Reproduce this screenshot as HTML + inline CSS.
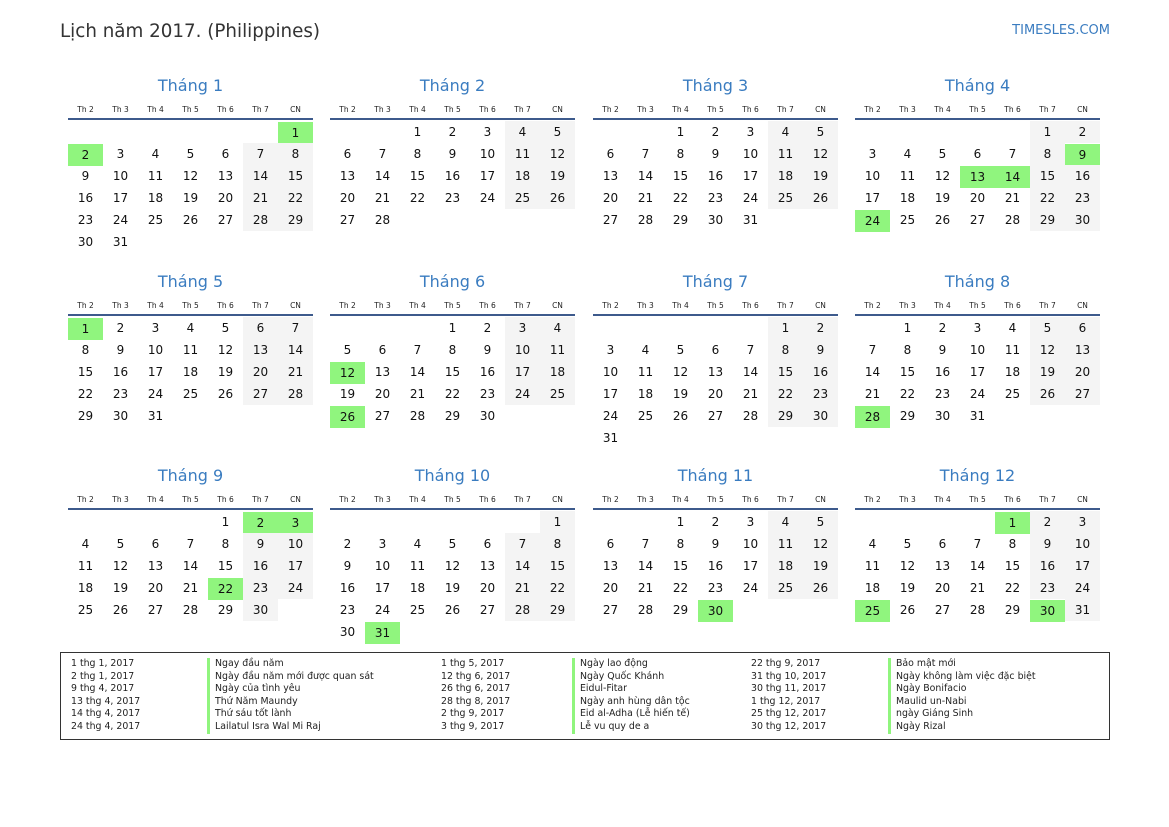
<!DOCTYPE html>
<html><head><meta charset="utf-8"><style>
*{margin:0;padding:0}
body{width:1169px;height:827px;background:#fff;position:relative;font-family:"DejaVu Sans","Liberation Sans",sans-serif;color:#111;overflow:hidden}
.title{position:absolute;left:60px;top:21px;font-size:18.3px;color:#333}
.site{position:absolute;right:59px;top:23px;font-size:13px;color:#3a7cc0}
.m{position:absolute;width:245px}
.t{height:28px;line-height:28px;text-align:center;font-size:16px;color:#3a7cc0}
.hd{position:absolute;top:32px;left:0;width:245px;height:14px;border-bottom:2px solid #3d5a8c;display:flex}
.hd i{font-style:normal;width:35px;text-align:center;font-size:7.5px;line-height:12px;color:#222}
.g{position:absolute;top:49px;left:0;display:grid;grid-template-columns:repeat(7,35px);grid-auto-rows:22px}
.g i{font-style:normal;text-align:center;line-height:22px;font-size:12px}
.g i:nth-child(7n+6):not(:empty),.g i:nth-child(7n):not(:empty){background:#f4f4f4}
.g i.h{background:#90f57e !important;margin:1px 0 -1px}
.lg{position:absolute;left:60px;top:652px;width:1048px;height:86px;border:1px solid #333;font-size:9.4px;color:#222}
.c{position:absolute;top:5px;line-height:12.6px}
.n{border-left:3px solid #90f57e;padding-left:5px}
</style></head><body>
<div class="title">Lịch năm 2017. (Philippines)</div>
<div class="site">TIMESLES.COM</div>

<div class="m" style="left:68px;top:72px"><div class="t">Tháng 1</div><div class="hd"><i>Th 2</i><i>Th 3</i><i>Th 4</i><i>Th 5</i><i>Th 6</i><i>Th 7</i><i>CN</i></div><div class="g"><i></i><i></i><i></i><i></i><i></i><i></i><i class=h>1</i><i class=h>2</i><i>3</i><i>4</i><i>5</i><i>6</i><i>7</i><i>8</i><i>9</i><i>10</i><i>11</i><i>12</i><i>13</i><i>14</i><i>15</i><i>16</i><i>17</i><i>18</i><i>19</i><i>20</i><i>21</i><i>22</i><i>23</i><i>24</i><i>25</i><i>26</i><i>27</i><i>28</i><i>29</i><i>30</i><i>31</i></div></div>

<div class="m" style="left:330px;top:72px"><div class="t">Tháng 2</div><div class="hd"><i>Th 2</i><i>Th 3</i><i>Th 4</i><i>Th 5</i><i>Th 6</i><i>Th 7</i><i>CN</i></div><div class="g"><i></i><i></i><i>1</i><i>2</i><i>3</i><i>4</i><i>5</i><i>6</i><i>7</i><i>8</i><i>9</i><i>10</i><i>11</i><i>12</i><i>13</i><i>14</i><i>15</i><i>16</i><i>17</i><i>18</i><i>19</i><i>20</i><i>21</i><i>22</i><i>23</i><i>24</i><i>25</i><i>26</i><i>27</i><i>28</i></div></div>

<div class="m" style="left:593px;top:72px"><div class="t">Tháng 3</div><div class="hd"><i>Th 2</i><i>Th 3</i><i>Th 4</i><i>Th 5</i><i>Th 6</i><i>Th 7</i><i>CN</i></div><div class="g"><i></i><i></i><i>1</i><i>2</i><i>3</i><i>4</i><i>5</i><i>6</i><i>7</i><i>8</i><i>9</i><i>10</i><i>11</i><i>12</i><i>13</i><i>14</i><i>15</i><i>16</i><i>17</i><i>18</i><i>19</i><i>20</i><i>21</i><i>22</i><i>23</i><i>24</i><i>25</i><i>26</i><i>27</i><i>28</i><i>29</i><i>30</i><i>31</i></div></div>

<div class="m" style="left:855px;top:72px"><div class="t">Tháng 4</div><div class="hd"><i>Th 2</i><i>Th 3</i><i>Th 4</i><i>Th 5</i><i>Th 6</i><i>Th 7</i><i>CN</i></div><div class="g"><i></i><i></i><i></i><i></i><i></i><i>1</i><i>2</i><i>3</i><i>4</i><i>5</i><i>6</i><i>7</i><i>8</i><i class=h>9</i><i>10</i><i>11</i><i>12</i><i class=h>13</i><i class=h>14</i><i>15</i><i>16</i><i>17</i><i>18</i><i>19</i><i>20</i><i>21</i><i>22</i><i>23</i><i class=h>24</i><i>25</i><i>26</i><i>27</i><i>28</i><i>29</i><i>30</i></div></div>

<div class="m" style="left:68px;top:268px"><div class="t">Tháng 5</div><div class="hd"><i>Th 2</i><i>Th 3</i><i>Th 4</i><i>Th 5</i><i>Th 6</i><i>Th 7</i><i>CN</i></div><div class="g"><i class=h>1</i><i>2</i><i>3</i><i>4</i><i>5</i><i>6</i><i>7</i><i>8</i><i>9</i><i>10</i><i>11</i><i>12</i><i>13</i><i>14</i><i>15</i><i>16</i><i>17</i><i>18</i><i>19</i><i>20</i><i>21</i><i>22</i><i>23</i><i>24</i><i>25</i><i>26</i><i>27</i><i>28</i><i>29</i><i>30</i><i>31</i></div></div>

<div class="m" style="left:330px;top:268px"><div class="t">Tháng 6</div><div class="hd"><i>Th 2</i><i>Th 3</i><i>Th 4</i><i>Th 5</i><i>Th 6</i><i>Th 7</i><i>CN</i></div><div class="g"><i></i><i></i><i></i><i>1</i><i>2</i><i>3</i><i>4</i><i>5</i><i>6</i><i>7</i><i>8</i><i>9</i><i>10</i><i>11</i><i class=h>12</i><i>13</i><i>14</i><i>15</i><i>16</i><i>17</i><i>18</i><i>19</i><i>20</i><i>21</i><i>22</i><i>23</i><i>24</i><i>25</i><i class=h>26</i><i>27</i><i>28</i><i>29</i><i>30</i></div></div>

<div class="m" style="left:593px;top:268px"><div class="t">Tháng 7</div><div class="hd"><i>Th 2</i><i>Th 3</i><i>Th 4</i><i>Th 5</i><i>Th 6</i><i>Th 7</i><i>CN</i></div><div class="g"><i></i><i></i><i></i><i></i><i></i><i>1</i><i>2</i><i>3</i><i>4</i><i>5</i><i>6</i><i>7</i><i>8</i><i>9</i><i>10</i><i>11</i><i>12</i><i>13</i><i>14</i><i>15</i><i>16</i><i>17</i><i>18</i><i>19</i><i>20</i><i>21</i><i>22</i><i>23</i><i>24</i><i>25</i><i>26</i><i>27</i><i>28</i><i>29</i><i>30</i><i>31</i></div></div>

<div class="m" style="left:855px;top:268px"><div class="t">Tháng 8</div><div class="hd"><i>Th 2</i><i>Th 3</i><i>Th 4</i><i>Th 5</i><i>Th 6</i><i>Th 7</i><i>CN</i></div><div class="g"><i></i><i>1</i><i>2</i><i>3</i><i>4</i><i>5</i><i>6</i><i>7</i><i>8</i><i>9</i><i>10</i><i>11</i><i>12</i><i>13</i><i>14</i><i>15</i><i>16</i><i>17</i><i>18</i><i>19</i><i>20</i><i>21</i><i>22</i><i>23</i><i>24</i><i>25</i><i>26</i><i>27</i><i class=h>28</i><i>29</i><i>30</i><i>31</i></div></div>

<div class="m" style="left:68px;top:462px"><div class="t">Tháng 9</div><div class="hd"><i>Th 2</i><i>Th 3</i><i>Th 4</i><i>Th 5</i><i>Th 6</i><i>Th 7</i><i>CN</i></div><div class="g"><i></i><i></i><i></i><i></i><i>1</i><i class=h>2</i><i class=h>3</i><i>4</i><i>5</i><i>6</i><i>7</i><i>8</i><i>9</i><i>10</i><i>11</i><i>12</i><i>13</i><i>14</i><i>15</i><i>16</i><i>17</i><i>18</i><i>19</i><i>20</i><i>21</i><i class=h>22</i><i>23</i><i>24</i><i>25</i><i>26</i><i>27</i><i>28</i><i>29</i><i>30</i></div></div>

<div class="m" style="left:330px;top:462px"><div class="t">Tháng 10</div><div class="hd"><i>Th 2</i><i>Th 3</i><i>Th 4</i><i>Th 5</i><i>Th 6</i><i>Th 7</i><i>CN</i></div><div class="g"><i></i><i></i><i></i><i></i><i></i><i></i><i>1</i><i>2</i><i>3</i><i>4</i><i>5</i><i>6</i><i>7</i><i>8</i><i>9</i><i>10</i><i>11</i><i>12</i><i>13</i><i>14</i><i>15</i><i>16</i><i>17</i><i>18</i><i>19</i><i>20</i><i>21</i><i>22</i><i>23</i><i>24</i><i>25</i><i>26</i><i>27</i><i>28</i><i>29</i><i>30</i><i class=h>31</i></div></div>

<div class="m" style="left:593px;top:462px"><div class="t">Tháng 11</div><div class="hd"><i>Th 2</i><i>Th 3</i><i>Th 4</i><i>Th 5</i><i>Th 6</i><i>Th 7</i><i>CN</i></div><div class="g"><i></i><i></i><i>1</i><i>2</i><i>3</i><i>4</i><i>5</i><i>6</i><i>7</i><i>8</i><i>9</i><i>10</i><i>11</i><i>12</i><i>13</i><i>14</i><i>15</i><i>16</i><i>17</i><i>18</i><i>19</i><i>20</i><i>21</i><i>22</i><i>23</i><i>24</i><i>25</i><i>26</i><i>27</i><i>28</i><i>29</i><i class=h>30</i></div></div>

<div class="m" style="left:855px;top:462px"><div class="t">Tháng 12</div><div class="hd"><i>Th 2</i><i>Th 3</i><i>Th 4</i><i>Th 5</i><i>Th 6</i><i>Th 7</i><i>CN</i></div><div class="g"><i></i><i></i><i></i><i></i><i class=h>1</i><i>2</i><i>3</i><i>4</i><i>5</i><i>6</i><i>7</i><i>8</i><i>9</i><i>10</i><i>11</i><i>12</i><i>13</i><i>14</i><i>15</i><i>16</i><i>17</i><i>18</i><i>19</i><i>20</i><i>21</i><i>22</i><i>23</i><i>24</i><i class=h>25</i><i>26</i><i>27</i><i>28</i><i>29</i><i class=h>30</i><i>31</i></div></div>

<div class="lg">
<div class="c" style="left:10px">1 thg 1, 2017<br>2 thg 1, 2017<br>9 thg 4, 2017<br>13 thg 4, 2017<br>14 thg 4, 2017<br>24 thg 4, 2017</div>
<div class="c n" style="left:146px">Ngay đầu năm<br>Ngày đầu năm mới được quan sát<br>Ngày của tình yêu<br>Thứ Năm Maundy<br>Thứ sáu tốt lành<br>Lailatul Isra Wal Mi Raj</div>
<div class="c" style="left:380px">1 thg 5, 2017<br>12 thg 6, 2017<br>26 thg 6, 2017<br>28 thg 8, 2017<br>2 thg 9, 2017<br>3 thg 9, 2017</div>
<div class="c n" style="left:511px">Ngày lao động<br>Ngày Quốc Khánh<br>Eidul-Fitar<br>Ngày anh hùng dân tộc<br>Eid al-Adha (Lễ hiến tế)<br>Lễ vu quy de a</div>
<div class="c" style="left:690px">22 thg 9, 2017<br>31 thg 10, 2017<br>30 thg 11, 2017<br>1 thg 12, 2017<br>25 thg 12, 2017<br>30 thg 12, 2017</div>
<div class="c n" style="left:827px">Bảo mật mới<br>Ngày không làm việc đặc biệt<br>Ngày Bonifacio<br>Maulid un-Nabi<br>ngày Giáng Sinh<br>Ngày Rizal</div>
</div>
</body></html>
